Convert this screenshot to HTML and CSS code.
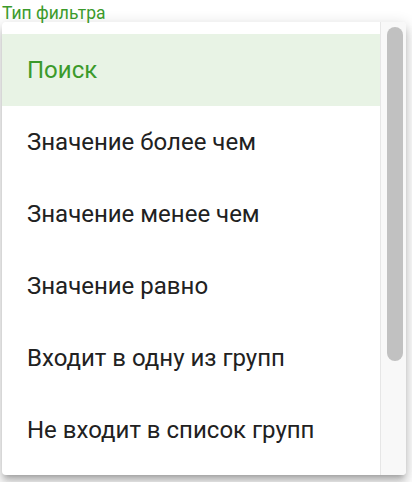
FILE: index.html
```html
<!DOCTYPE html>
<html lang="ru">
<head>
<meta charset="utf-8">
<link rel="stylesheet" href="styles.css">
</head>
<body>
<div class="label">Тип фильтра</div>
<div class="menu">
  <ul class="list">
    <li class="item selected">Поиск</li>
    <li class="item">Значение более чем</li>
    <li class="item">Значение менее чем</li>
    <li class="item">Значение равно</li>
    <li class="item">Входит в одну из групп</li>
    <li class="item">Не входит в список групп</li>
  </ul>
  <div class="scrollbar"><div class="thumb"></div></div>
</div>
</body>
</html>
```
FILE: styles.css
```css
html, body { margin: 0; padding: 0; background: #fff; }
body { font-family: Roboto, "Noto Sans", sans-serif; width: 412px; height: 482px; overflow: hidden; }
.label {
  color: #3b9a2b;
  font-size: 17.5px;
  line-height: 20px;
  padding: 3px 0 0 2px;
  height: 22px;
  box-sizing: border-box;
  white-space: nowrap;
}
.menu {
  margin-left: 2px;
  width: 404px;
  height: 453px;
  border-radius: 4px;
  background: #fff;
  box-shadow: 0 5px 5px -3px rgba(0,0,0,.2), 0 8px 10px 1px rgba(0,0,0,.14), 0 3px 14px 2px rgba(0,0,0,.12);
  display: flex;
  overflow: hidden;
}
.list {
  list-style: none;
  margin: 0;
  padding: 12px 0 0 0;
  flex: 1;
}
.item {
  height: 72px;
  display: flex;
  align-items: center;
  padding-left: 25px;
  font-size: 24px;
  color: #212121;
}
.item.selected {
  background: #e8f3e5;
  color: #3b9a2b;
}
.scrollbar {
  width: 26px;
  border-left: 1px solid #e6e6e6;
  background: #f8f8f8;
  padding: 5px 4px 0 6px;
  box-sizing: border-box;
}
.thumb {
  width: 16px;
  height: 334px;
  border-radius: 8px;
  background: #c1c1c1;
}
```
